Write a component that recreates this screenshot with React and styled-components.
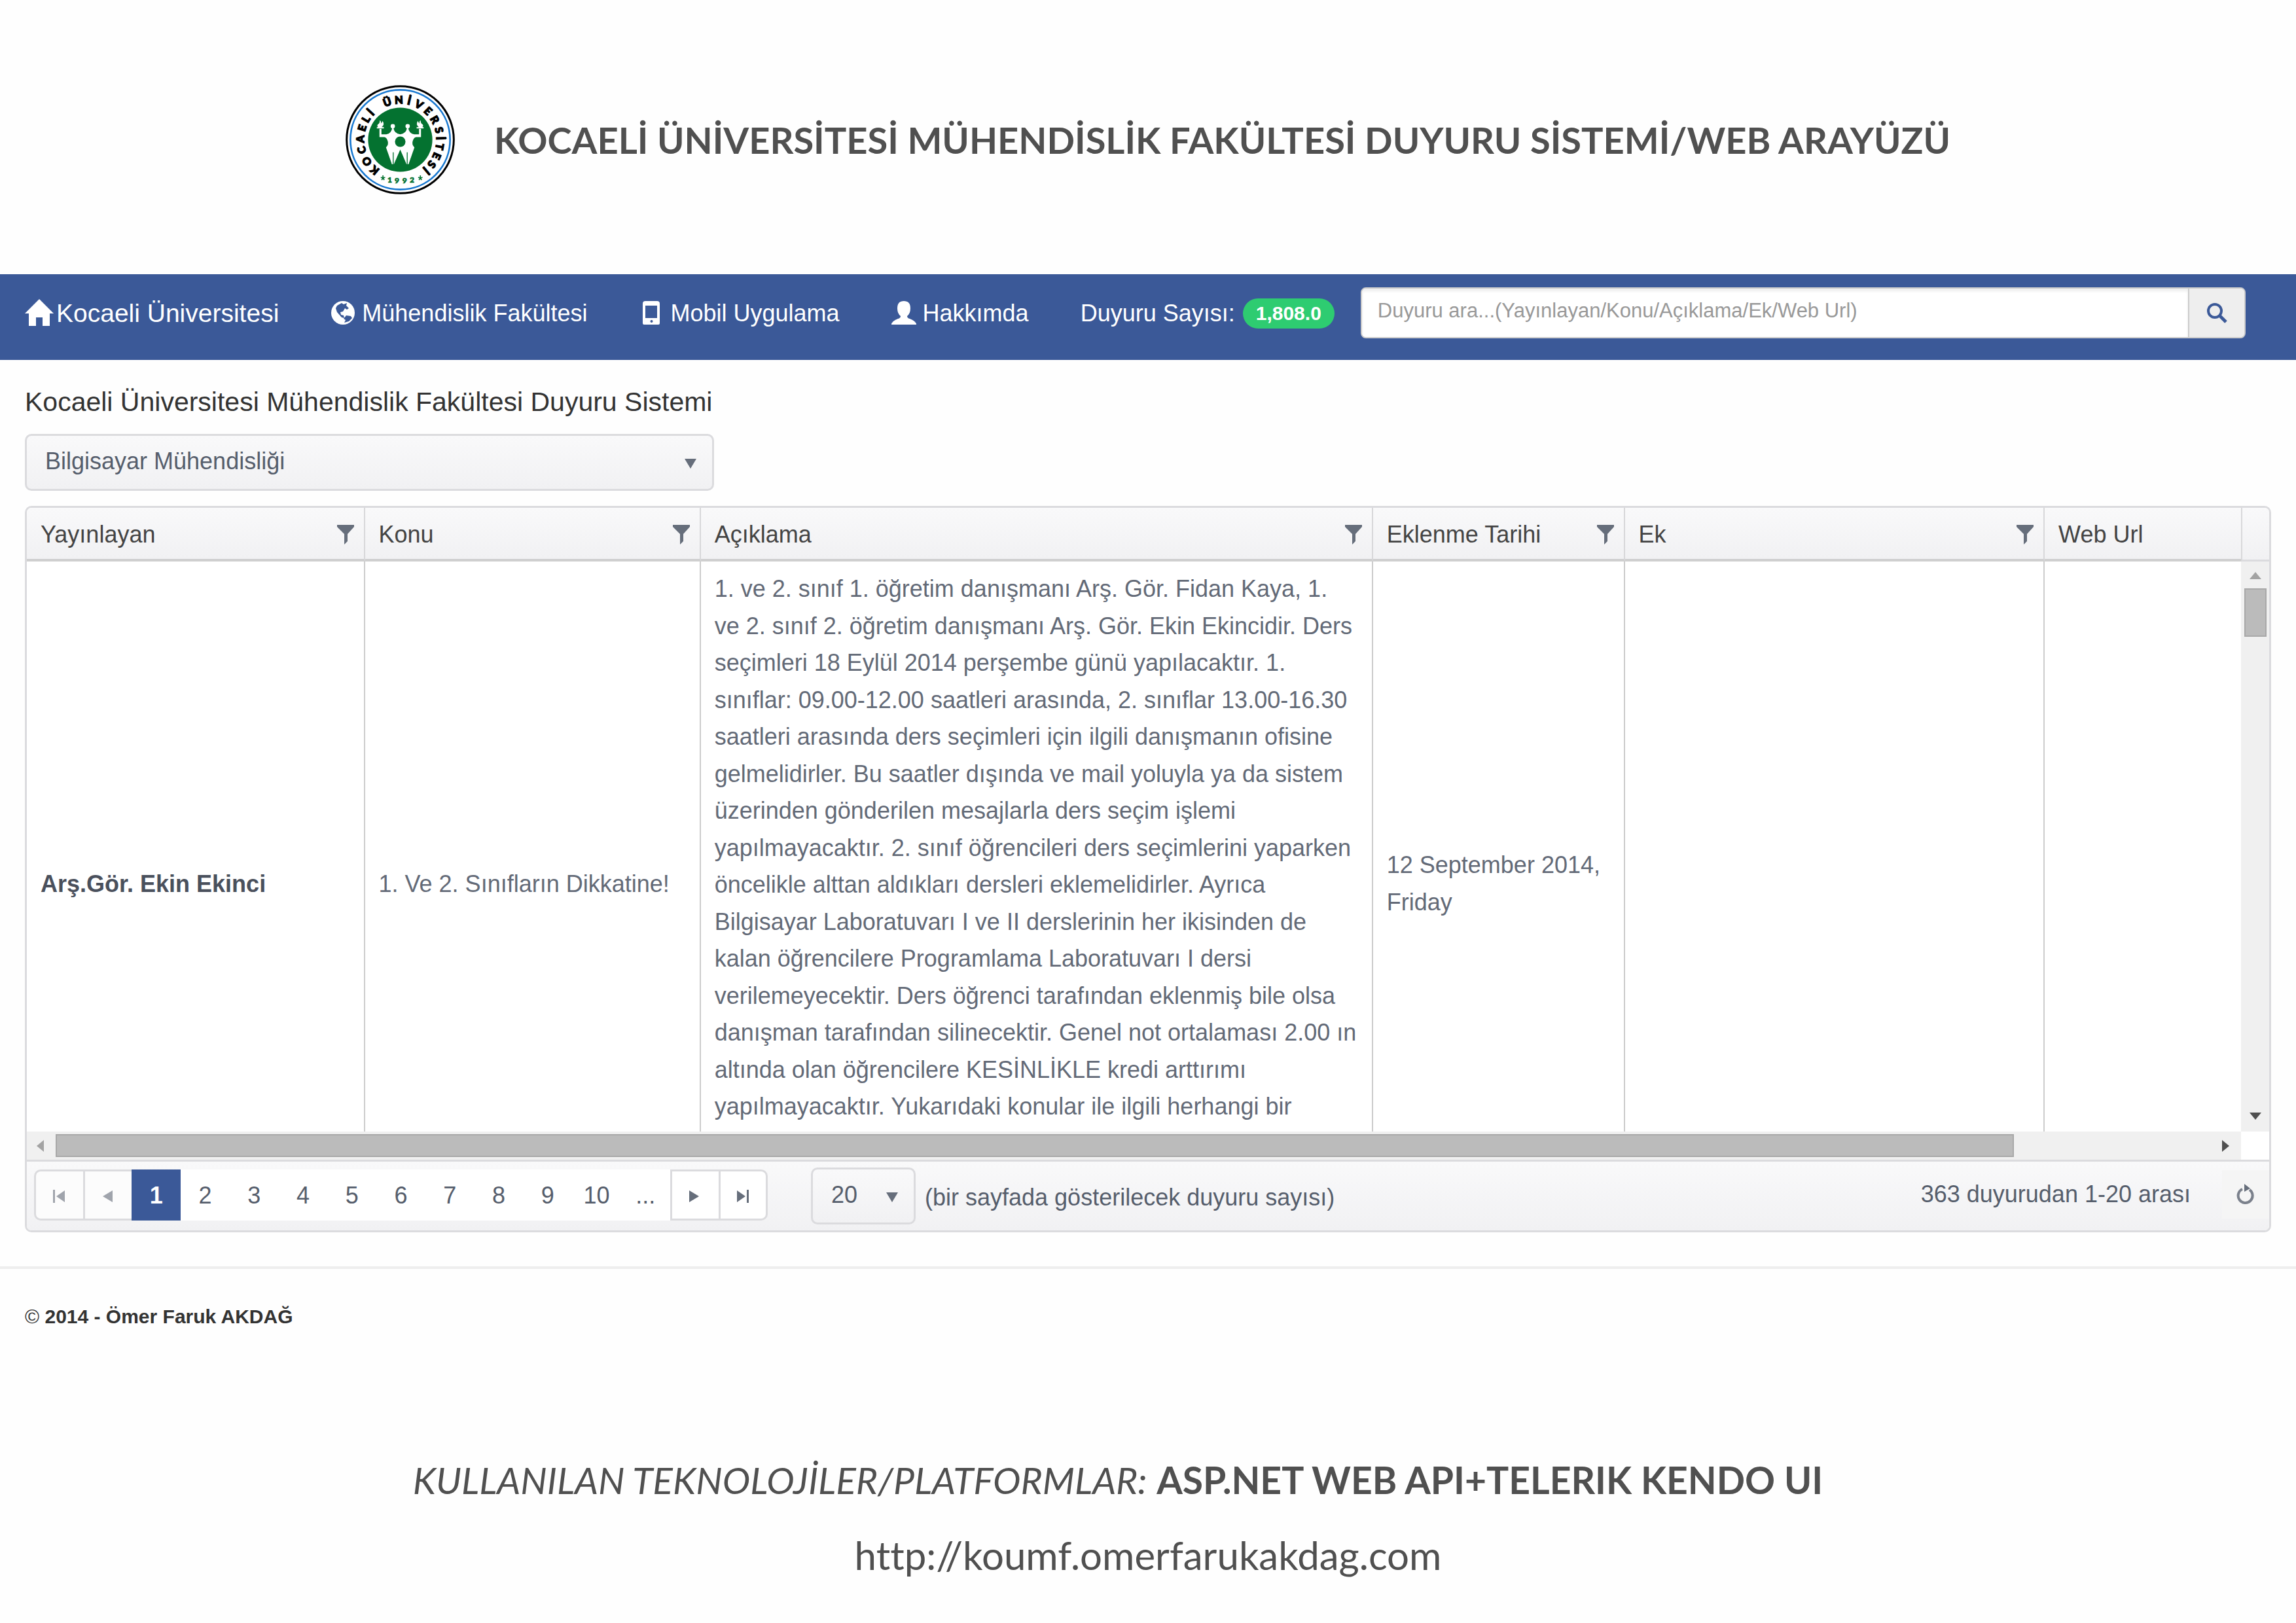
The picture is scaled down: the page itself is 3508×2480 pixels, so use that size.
import React from "react";
import styled, { createGlobalStyle } from "styled-components";

const GlobalStyle = createGlobalStyle`
  * { box-sizing: border-box; }
  body {
    margin: 0;
    background: #fefefe;
    color: #565e6c;
    font-family: "Liberation Sans", Arial, sans-serif;
    font-size: 36px;
  }
  button, input, select { font: inherit; color: inherit; margin: 0; }
  a { color: inherit; text-decoration: none; }
`;

/* ---------- banner ---------- */

const Banner = styled.header`
  display: flex;
  align-items: center;
  justify-content: center;
  gap: 60px;
  padding: 130px 40px 122px;
`;

const BannerTitle = styled.h1`
  margin: 0;
  color: #505050;
  font-family: Lato, "Open Sans", sans-serif;
  font-size: 56px;
  line-height: 64px;
  font-weight: 700;
`;

const LogoSvg = styled.svg`
  width: 167px;
  height: 167px;
  font-family: Lato, sans-serif;
  font-weight: 900;
  text-anchor: middle;
`;

const RING_LETTERS = [
  ["K", 130], ["O", 147], ["C", 165], ["A", 181], ["E", 197], ["L", 211], ["İ", 223],
  ["Ü", 251], ["N", 268], ["İ", 283], ["V", 298], ["E", 314], ["R", 330], ["S", 346],
  ["İ", 358], ["T", 370], ["E", 384], ["S", 398], ["İ", 410],
];

const Logo = () => (
  <LogoSvg viewBox="-250 -250 500 500" role="img" aria-label="Kocaeli Üniversitesi">
    <circle r="245" fill="#fff" stroke="#000" strokeWidth="9" />
    <circle r="228" fill="none" stroke="#1878d0" strokeWidth="8" />
    <circle r="147" fill="#047230" />
    {RING_LETTERS.map(([letter, angle]) => (
      <text key={angle} y="-165" fontSize="49" fill="#000" stroke="#000" strokeWidth="4" transform={`rotate(${angle + 90})`}>
        {letter}
      </text>
    ))}
    {[["1", -48, 195], ["9", -15, 199], ["9", 20, 199], ["2", 54, 195]].map(([digit, x, y]) => (
      <text key={x} x={x} y={y} fontSize="36" fill="#047230" stroke="#047230" strokeWidth="2">{digit}</text>
    ))}
    <g stroke="#047230" strokeWidth="5">
      {[-79, 92].map((x) => (
        <path key={x} d={`M${x} 163v12M${x - 10} 172l10 3l10-3M${x - 6} 184l6-9l6 9`} fill="none" />
      ))}
    </g>
    <g fill="#fff">
      <circle cx="-34" cy="-62" r="10" />
      <circle cx="34" cy="-62" r="10" />
      <path d="M-95-50h9v25h22q24-3 27-28h6q5 26 31 28q26-2 31-28h6q3 25 27 28h22v-25h9v38h-23q-11 3-15 19q-5 16 8 28l-27 77h-9l-29-67l-29 67h-9l-27-77q13-12 8-28q-4-16-15-19h-23z" />
      <path d="M-107-52h32v-6h-10q16-12 4-28q-2 10-8 12q4-10-5-14q2 12-8 18q-6 6 1 12h-6z" />
      <path d="M107-52h-32v-6h10q-16-12-4-28q2 10 8 12q-4-10 5-14q-2 12 8 18q6 6-1 12h6z" />
    </g>
    <circle cy="9" r="24" fill="#047230" />
    <path d="M-32 58v54M32 58v54" stroke="#047230" strokeWidth="4" />
  </LogoSvg>
);

/* ---------- navigation ---------- */

const NavBar = styled.nav`
  display: flex;
  align-items: center;
  gap: 40px;
  padding: 20px 77px 33px 38px;
  background: #3b5998;
  color: #fff;
`;

const NavLinks = styled.div`
  display: flex;
  align-items: center;
  gap: 79px;
  padding-top: 2px;
  white-space: nowrap;
`;

const NavLink = styled.a`
  display: flex;
  align-items: center;
  gap: ${(p) => (p.$brand ? 4 : 10)}px;
  font-size: ${(p) => (p.$brand ? 39 : 36)}px;
  line-height: 44px;
`;

const NavCount = styled.div`
  display: flex;
  align-items: center;
  gap: 12px;
  line-height: 44px;
`;

const Badge = styled.span`
  padding: 0 20px;
  border-radius: 24px;
  background: #2ecc71;
  font-size: 30px;
  line-height: 46px;
  font-weight: 700;
`;

const NavIcon = styled.svg`
  flex: none;
  width: ${(p) => p.$size}px;
  height: ${(p) => p.$size}px;
  fill: #fff;
`;

const HomeIcon = () => (
  <NavIcon viewBox="0 0 44 44" $size={44} aria-hidden="true">
    <path d="M22 0L44 22H38V41H27V28H17V41H6V22H0Z" />
  </NavIcon>
);
const GlobeIcon = () => (
  <NavIcon viewBox="0 0 38 38" $size={38} aria-hidden="true">
    <circle cx="19" cy="18" r="18" />
    <path fill="#3b5998" d="M10 7L17 3L20 5L25 3L24 7L28 11L25 13L22 11L19 16L15 17L16 21L20 22L21 26L17 25L10 17L8 11ZM24 22L31 23L33 26L28 31L21 33L23 29L20 27Z" />
  </NavIcon>
);
const PhoneIcon = () => (
  <NavIcon viewBox="0 0 38 38" $size={38} aria-hidden="true">
    <path fillRule="evenodd" d="M10 0H28Q32 0 32 4V34Q32 36 30 36H8Q6 36 6 34V4Q6 0 10 0ZM10 7V26H28V7ZM19 29a2 2 0 1 0 1 0Z" />
  </NavIcon>
);
const UserIcon = () => (
  <NavIcon viewBox="0 0 38 38" $size={38} aria-hidden="true">
    <path d="M19 0Q29 0 29 11Q29 19 24 23Q24 26 28 27Q38 31 38 36H0Q0 31 10 27Q14 26 14 23Q9 19 9 11Q9 0 19 0Z" />
  </NavIcon>
);

const Search = styled.form`
  display: flex;
  flex: 1;
  min-width: 0;
  height: 78px;
  overflow: hidden;
  border: 2px solid #ccc;
  border-radius: 8px;
  background: #fff;
`;

const SearchInput = styled.input`
  flex: 1;
  min-width: 0;
  padding: 0 24px 6px;
  border: 0;
  background: #fff;
  color: #555;
  font-size: 31px;
  box-shadow: inset 0 4px 4px #eee;
  &::placeholder { color: #999; opacity: 1; }
`;

const SearchButton = styled.button`
  display: flex;
  align-items: center;
  justify-content: center;
  width: 86px;
  padding: 0;
  border: 0;
  border-left: 2px solid #ccc;
  background: #eee;
`;

const SearchSvg = styled.svg`
  width: 32px;
  height: 32px;
  fill: none;
  stroke: #3b5998;
`;

/* ---------- page body ---------- */

const Content = styled.main`
  padding: 40px 38px 52px;
`;

const Heading = styled.h2`
  margin: 0 0 25px;
  color: #333;
  font-size: 41px;
  line-height: 48px;
  font-weight: 400;
`;

const SelectBox = styled.div`
  position: relative;
  width: ${(p) => p.$width};
`;

const Select = styled.select`
  appearance: none;
  display: block;
  width: 100%;
  height: 87px;
  padding: 0 28px 4px;
  border: 3px solid #dbdbde;
  border-radius: 10px;
  background: linear-gradient(#f9f9fa, #f1f1f3);
`;

const SelectArrow = styled.svg`
  position: absolute;
  right: 27px;
  top: 38px;
  width: 18px;
  height: 15px;
  fill: #666e7b;
  pointer-events: none;
`;

const Dropdown = ({ id, width, label, options }) => (
  <SelectBox $width={width}>
    <Select id={id} aria-label={label}>
      {options.map((o) => <option key={o}>{o}</option>)}
    </Select>
    <SelectArrow viewBox="0 0 18 15" aria-hidden="true"><path d="M0 0H18L9 15Z" /></SelectArrow>
  </SelectBox>
);

/* ---------- grid ---------- */

const Grid = styled.section`
  margin-top: 23px;
  overflow: hidden;
  border: 3px solid #dbdbde;
  border-radius: 10px;
  background: #fff;
`;

const GridView = styled.div`
  display: grid;
  grid-template-columns: minmax(0, 1fr) 43px;
  grid-template-rows: 953px 43px;
`;

const TableClip = styled.div`
  overflow: hidden;
`;

const Table = styled.table`
  width: 110%;
  table-layout: fixed;
  border-collapse: separate;
  border-spacing: 0;
`;

const Col = styled.col`
  width: ${(p) => p.$share}%;
`;

const Th = styled.th`
  height: 82px;
  padding: 3px 15px 0 21px;
  border-right: 2px solid #d8d8da;
  border-bottom: 4px solid #cfcfcf;
  background: linear-gradient(#f9f9fa, #f1f1f3);
  color: #444;
  font-weight: 400;
  text-align: left;
`;

const ThInner = styled.div`
  display: flex;
  align-items: center;
  justify-content: space-between;
  line-height: 44px;
`;

const FilterButton = styled.button`
  display: flex;
  padding: 0;
  border: 0;
  background: none;
`;

const FilterSvg = styled.svg`
  width: 26px;
  height: 30px;
  fill: #666e7b;
`;

const Td = styled.td`
  height: 986px;
  padding: 14px 21px;
  border-right: 2px solid #cdcdcd;
  line-height: 1.57;
  vertical-align: ${(p) => (p.$top ? "top" : "middle")};
  color: #636a77;
`;

const Author = styled.strong`
  color: #4a505c;
`;

const ScrollSide = styled.div`
  display: flex;
  flex-direction: column;
  background: #f0f0f0;
`;

const HeaderCap = styled.div`
  flex: none;
  height: 82px;
  border-left: 2px solid #d8d8da;
  border-bottom: 3px solid #dbdbde;
  background: linear-gradient(#f9f9fa, #f1f1f3);
`;

const Track = styled.div`
  display: flex;
  flex: 1;
  flex-direction: ${(p) => (p.$vertical ? "column" : "row")};
  align-items: center;
  justify-content: space-between;
  background: #f0f0f0;
  padding: ${(p) => (p.$vertical ? "16px 0 18px" : "0 18px 0 15px")};
  gap: ${(p) => (p.$vertical ? 14 : 18)}px;
`;

const TrackRun = styled.div`
  flex: 1;
  display: flex;
  flex-direction: ${(p) => (p.$vertical ? "column" : "row")};
`;

const Thumb = styled.div`
  width: ${(p) => p.$width};
  height: ${(p) => p.$height};
  border: 2px solid #a8a8a8;
  background: #bbb;
`;

const Arrow = styled.svg`
  flex: none;
  width: ${(p) => p.$w}px;
  height: ${(p) => p.$h}px;
  fill: ${(p) => p.$color};
`;

/* ---------- pager ---------- */

const Pager = styled.div`
  display: flex;
  align-items: center;
  height: 108px;
  padding-left: 11px;
  border-top: 3px solid #dbdbde;
  background: linear-gradient(#f9f9fa, #f1f1f3);
`;

const PageList = styled.ul`
  display: grid;
  grid-template-columns: repeat(15, minmax(0, 1fr));
  width: 1121px;
  height: 78px;
  margin: 0 66px 4px 0;
  padding: 0;
  list-style: none;
`;

const PageItem = styled.li`
  display: flex;
`;

const PageButton = styled.button`
  display: flex;
  flex: 1;
  align-items: center;
  justify-content: center;
  padding: 2px 0 0;
  border: 0;
  background: ${(p) => (p.$active ? "#3b5998" : "#fff")};
  color: ${(p) => (p.$active ? "#fff" : "inherit")};
  font-weight: ${(p) => (p.$active ? 700 : 400)};
`;

const StepButton = styled(PageButton)`
  padding: 5px 0 0;
  border: 3px solid #dbdbde;
  border-width: ${(p) => (p.$edge === "right" ? "3px" : "3px 0 3px 3px")};
  border-radius: ${(p) => (p.$edge === "left" ? "10px 0 0 10px" : p.$edge === "right" ? "0 10px 10px 0" : "0")};
  fill: #666e7b;
  &:disabled { background: #fcfcfc; fill: #a0a4ac; }
`;

const StepSvg = styled.svg`
  width: 20px;
  height: 20px;
`;

const STEP_PATHS = {
  first: "M0 0h3v20h-3zM18 1v18L5 10z",
  prev: "M16 1v18L1 10z",
  next: "M1 1v18L16 10z",
  last: "M15 0h3v20h-3zM0 1v18L13 10z",
};

const Step = ({ kind, label, edge, disabled }) => (
  <PageItem>
    <StepButton type="button" aria-label={label} $edge={edge} disabled={disabled}>
      <StepSvg viewBox="0 0 20 20" aria-hidden="true"><path d={STEP_PATHS[kind]} /></StepSvg>
    </StepButton>
  </PageItem>
);

const SizeLabel = styled.label`
  margin-left: 14px;
  padding-top: 4px;
`;

const PagerInfo = styled.span`
  margin-left: auto;
  padding-bottom: 6px;
`;

const Refresh = styled.button`
  display: flex;
  align-items: center;
  justify-content: center;
  width: 72px;
  height: 74px;
  margin: 0 0 6px 48px;
  padding: 0 22px;
  border: 0;
  background: #f5f5f5;
`;

const RefreshSvg = styled.svg`
  flex: none;
  width: 28px;
  height: 32px;
`;

/* ---------- footer ---------- */

const Footer = styled.footer`
  padding: 55px 38px 0;
  border-top: 4px solid #eee;
  color: #333;
  font-size: 30px;
  line-height: 36px;
`;

const Credits = styled.section`
  padding: 199px 40px 40px;
  color: #505050;
  font-family: Lato, "Open Sans", sans-serif;
  line-height: 64px;
  text-align: center;
`;

const Tech = styled.p`
  margin: 0 92px 51px 0;
  font-size: 57px;
`;

const SiteLink = styled.a`
  font-size: 60px;
  font-variant-ligatures: none;
`;

const COLUMNS = [
  { title: "Yayınlayan", share: 13.88, filter: true },
  { title: "Konu", share: 13.79, filter: true },
  { title: "Açıklama", share: 27.6, filter: true },
  { title: "Eklenme Tarihi", share: 10.34, filter: true },
  { title: "Ek", share: 17.24, filter: true },
  { title: "Web Url", share: 17.15, filter: false },
];

const DESCRIPTION =
  "1. ve 2. sınıf 1. öğretim danışmanı Arş. Gör. Fidan Kaya, 1. ve 2. sınıf 2. öğretim danışmanı Arş. Gör. Ekin Ekincidir. Ders seçimleri 18 Eylül 2014 perşembe günü yapılacaktır. 1. sınıflar: 09.00-12.00 saatleri arasında, 2. sınıflar 13.00-16.30 saatleri arasında ders seçimleri için ilgili danışmanın ofisine gelmelidirler. Bu saatler dışında ve mail yoluyla ya da sistem üzerinden gönderilen mesajlarla ders seçim işlemi yapılmayacaktır. 2. sınıf öğrencileri ders seçimlerini yaparken öncelikle alttan aldıkları dersleri eklemelidirler. Ayrıca Bilgisayar Laboratuvarı I ve II derslerinin her ikisinden de kalan öğrencilere Programlama Laboratuvarı I dersi verilemeyecektir. Ders öğrenci tarafından eklenmiş bile olsa danışman tarafından silinecektir. Genel not ortalaması 2.00 ın altında olan öğrencilere KESİNLİKLE kredi arttırımı yapılmayacaktır. Yukarıdaki konular ile ilgili herhangi bir";

export default function App() {
  return (
    <>
      <GlobalStyle />
      <Banner>
        <Logo />
        <BannerTitle>KOCAELİ ÜNİVERSİTESİ MÜHENDİSLİK FAKÜLTESİ DUYURU SİSTEMİ/WEB ARAYÜZÜ</BannerTitle>
      </Banner>

      <NavBar>
        <NavLinks>
          <NavLink href="#" $brand><HomeIcon />Kocaeli Üniversitesi</NavLink>
          <NavLink href="#"><GlobeIcon />Mühendislik Fakültesi</NavLink>
          <NavLink href="#"><PhoneIcon />Mobil Uygulama</NavLink>
          <NavLink href="#"><UserIcon />Hakkımda</NavLink>
          <NavCount>Duyuru Sayısı:<Badge>1,808.0</Badge></NavCount>
        </NavLinks>
        <Search onSubmit={(e) => e.preventDefault()}>
          <SearchInput aria-label="Duyuru ara" placeholder="Duyuru ara...(Yayınlayan/Konu/Açıklama/Ek/Web Url)" />
          <SearchButton type="submit" aria-label="Ara">
            <SearchSvg viewBox="0 0 32 32" aria-hidden="true">
              <circle cx="13" cy="13" r="10" strokeWidth="4" />
              <path d="M20 20L30 30" strokeWidth="5" />
            </SearchSvg>
          </SearchButton>
        </Search>
      </NavBar>

      <Content>
        <Heading>Kocaeli Üniversitesi Mühendislik Fakültesi Duyuru Sistemi</Heading>
        <Dropdown id="department" label="Bölüm" width="1053px" options={["Bilgisayar Mühendisliği"]} />

        <Grid>
          <GridView>
            <TableClip>
              <Table>
                <colgroup>{COLUMNS.map((c) => <Col key={c.title} $share={c.share} />)}</colgroup>
                <thead>
                  <tr>
                    {COLUMNS.map((c) => (
                      <Th key={c.title} scope="col">
                        <ThInner>
                          {c.title}
                          {c.filter && (
                            <FilterButton type="button" aria-label={`${c.title} filtrele`}>
                              <FilterSvg viewBox="0 0 26 30" aria-hidden="true">
                                <path d="M0 0H26V3L16 14V25L11 30V14L0 3Z" />
                              </FilterSvg>
                            </FilterButton>
                          )}
                        </ThInner>
                      </Th>
                    ))}
                  </tr>
                </thead>
                <tbody>
                  <tr>
                    <Td><Author>Arş.Gör. Ekin Ekinci</Author></Td>
                    <Td>1. Ve 2. Sınıfların Dikkatine!</Td>
                    <Td $top>{DESCRIPTION}</Td>
                    <Td>12 September 2014, Friday</Td>
                    <Td />
                    <Td />
                  </tr>
                </tbody>
              </Table>
            </TableClip>
            <ScrollSide>
              <HeaderCap />
              <Track $vertical>
                <Arrow viewBox="0 0 18 11" $w={18} $h={11} $color="#a3a3a3"><path d="M0 11H18L9 0Z" /></Arrow>
                <TrackRun $vertical><Thumb $width="34px" $height="74px" /></TrackRun>
                <Arrow viewBox="0 0 18 11" $w={18} $h={11} $color="#505050"><path d="M0 0H18L9 11Z" /></Arrow>
              </Track>
            </ScrollSide>
            <Track>
              <Arrow viewBox="0 0 11 18" $w={11} $h={18} $color="#a3a3a3"><path d="M11 0V18L0 9Z" /></Arrow>
              <TrackRun><Thumb $width="90.9%" $height="35px" /></TrackRun>
              <Arrow viewBox="0 0 11 18" $w={11} $h={18} $color="#505050"><path d="M0 0V18L11 9Z" /></Arrow>
            </Track>
          </GridView>

          <Pager>
            <PageList>
              <Step kind="first" label="İlk sayfa" edge="left" disabled />
              <Step kind="prev" label="Önceki sayfa" disabled />
              {["1", "2", "3", "4", "5", "6", "7", "8", "9", "10", "..."].map((n) => (
                <PageItem key={n}><PageButton type="button" $active={n === "1"}>{n}</PageButton></PageItem>
              ))}
              <Step kind="next" label="Sonraki sayfa" />
              <Step kind="last" label="Son sayfa" edge="right" />
            </PageList>
            <Dropdown id="page-size" width="160px" options={["20"]} />
            <SizeLabel htmlFor="page-size">(bir sayfada gösterilecek duyuru sayısı)</SizeLabel>
            <PagerInfo>363 duyurudan 1-20 arası</PagerInfo>
            <Refresh type="button" aria-label="Yenile">
              <RefreshSvg viewBox="0 0 28 32" aria-hidden="true">
                <path d="M9 8A11 11 0 1 0 20 9" fill="none" stroke="#7b818c" strokeWidth="4" />
                <path d="M12 0L21 7L12 12Z" fill="#666e7b" />
              </RefreshSvg>
            </Refresh>
          </Pager>
        </Grid>
      </Content>

      <Footer>© <strong>2014 - Ömer Faruk AKDAĞ</strong></Footer>

      <Credits>
        <Tech><em>KULLANILAN TEKNOLOJİLER/PLATFORMLAR:</em> <strong>ASP.NET WEB API+TELERIK KENDO UI</strong></Tech>
        <SiteLink href="http://koumf.omerfarukakdag.com">http://koumf.omerfarukakdag.com</SiteLink>
      </Credits>
    </>
  );
}
